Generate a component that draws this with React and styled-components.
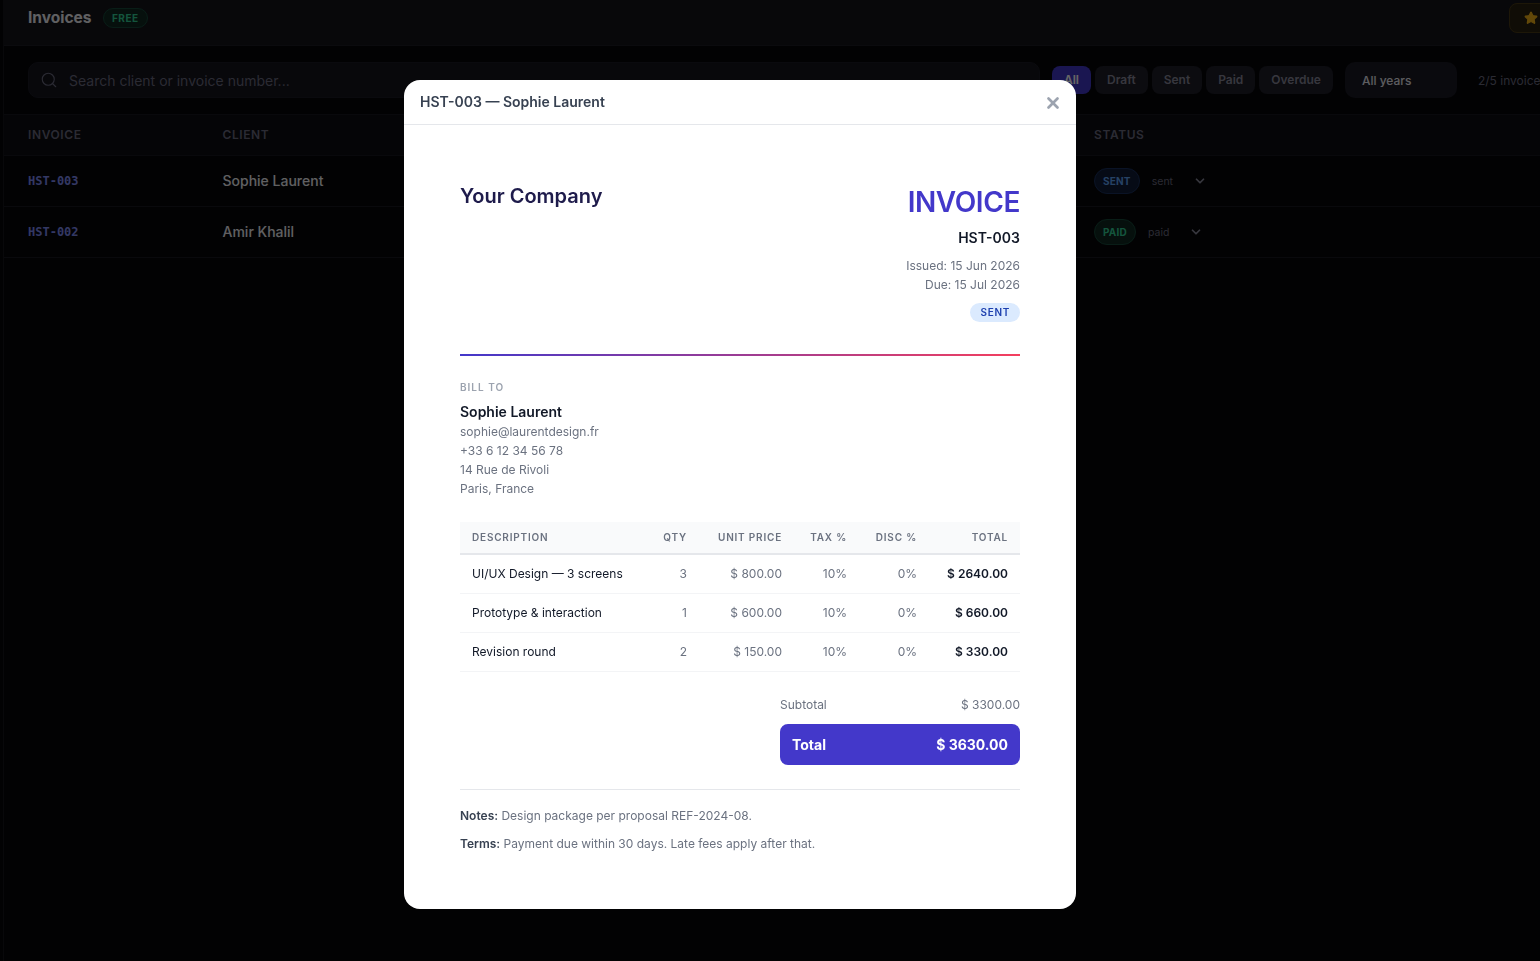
import styled, { createGlobalStyle } from "styled-components";
import { Search, ChevronDown, Star, X } from "lucide-react";

const GlobalStyle = createGlobalStyle`
  html, body {
    margin: 0;
    height: 100%;
    overflow: hidden;
    background: #060609;
    font-family: Inter, "Noto Sans", sans-serif;
  }
  * { box-sizing: border-box; }
`;

const Page = styled.div`
  width: 1640px;
  height: 961px;
  padding-left: 4px;
`;
const Main = styled.div`
  height: 100%;
  border-left: 1px solid #14141b;
  margin-left: -1px;
`;
const Header = styled.header`
  display: flex;
  align-items: center;
  height: 46px;
  padding: 0 0 10px 24px;
  gap: 11px;
  background: #14141b;
  border-bottom: 1px solid #1c1c25;
`;
const PageTitle = styled.h1`
  margin: 0;
  font-size: 15.5px;
  font-weight: 700;
  color: #f0f0f5;
`;
const FreeBadge = styled.span`
  padding: 3px 8.5px;
  border-radius: 999px;
  font-size: 10px;
  font-weight: 700;
  letter-spacing: 0.5px;
  color: #34d399;
  background: #0f2a22;
  border: 1px solid #17493a;
`;
const StarButton = styled.div`
  display: flex;
  align-items: center;
  width: 100px;
  height: 30px;
  margin-left: 1350px;
  padding-left: 14px;
  border-radius: 8px;
  color: #f5b417;
  background: #2a2210;
  border: 1px solid #4a3a14;
`;
const Toolbar = styled.div`
  display: flex;
  align-items: center;
  height: 68px;
  padding: 0 24px;
  gap: 12px;
`;
const SearchBox = styled.div`
  display: flex;
  align-items: center;
  width: 1012px;
  height: 36px;
  padding: 0 11px;
  gap: 11px;
  border-radius: 10px;
  font-size: 14px;
  color: #6b6b80;
  background: #14141c;
  border: 1px solid #1a1a24;
`;
const Chips = styled.div`
  display: flex;
  gap: 4px;
`;
const Chip = styled.div`
  padding: 6px 12px;
  height: 28px;
  border-radius: 8px;
  font-size: 12px;
  font-weight: 600;
  line-height: 16px;
  color: ${(p) => (p.$active ? "#ffffff" : "#8a8a9c")};
  background: ${(p) => (p.$active ? "#4338ca" : "#1e1e28")};
`;
const YearSelect = styled.div`
  width: 112px;
  height: 36px;
  padding: 0 17px;
  border-radius: 10px;
  font-size: 12px;
  font-weight: 500;
  line-height: 38px;
  color: #e8e8f0;
  background: #1a1a24;
`;
const Count = styled.span`
  margin-left: 9px;
  font-size: 12px;
  color: #6b6b80;
`;
const TableHead = styled.div`
  display: grid;
  grid-template-columns: 194.5px 871.5px 1fr;
  align-items: center;
  height: 42px;
  padding: 0 0 2px 24px;
  font-size: 12px;
  font-weight: 600;
  letter-spacing: 0.6px;
  color: #6b6b80;
  background: #0d0d13;
  border-top: 1px solid #181820;
  border-bottom: 1px solid #181820;
`;
const Row = styled.div`
  display: grid;
  grid-template-columns: 194.5px 871.5px 1fr;
  align-items: center;
  height: 51px;
  padding-left: 24px;
  border-bottom: 1px solid #181820;
`;
const InvoiceNo = styled.span`
  font-family: "DejaVu Sans Mono", monospace;
  font-size: 12px;
  font-weight: 700;
  color: #818cf8;
`;
const ClientName = styled.span`
  padding-bottom: 2px;
  font-size: 14px;
  font-weight: 500;
  color: #f0f0f5;
`;
const StatusCell = styled.div`
  display: flex;
  align-items: center;
  gap: 12px;
`;
const StatusPill = styled.span`
  padding: 6px 8px;
  border-radius: 999px;
  font-size: 10px;
  font-weight: 700;
  letter-spacing: 0.2px;
  color: ${(p) => (p.$paid ? "#34d399" : "#60a5fa")};
  background: ${(p) => (p.$paid ? "#0f2a22" : "#101d38")};
  border: 1px solid ${(p) => (p.$paid ? "#17493a" : "#1a3160")};
`;
const StatusText = styled.span`
  width: 29px;
  font-size: 10.5px;
  color: #6b6b80;
`;
const Overlay = styled.div`
  position: fixed;
  inset: 0;
  display: flex;
  align-items: flex-start;
  justify-content: center;
  padding: 80px 60px 0 0;
  background: rgba(0, 0, 0, 0.6);
`;
const Modal = styled.div`
  width: 672px;
  height: 829px;
  overflow: hidden;
  border-radius: 16px;
  background: #ffffff;
`;
const ModalHeader = styled.div`
  display: flex;
  align-items: center;
  justify-content: space-between;
  height: 45px;
  padding: 0 16px;
  border-bottom: 1px solid #e5e7eb;
`;
const ModalTitle = styled.span`
  padding-bottom: 2px;
  font-size: 14px;
  font-weight: 600;
  color: #374151;
`;
const CloseIcon = styled(X)`
  margin: 2px -2px 0 0;
  color: #9ca3af;
`;
const Paper = styled.div`
  padding: 56px 56px 0;
`;
const PaperTop = styled.div`
  display: flex;
  justify-content: space-between;
  height: 173px;
`;
const Company = styled.div`
  font-size: 20px;
  font-weight: 600;
  line-height: 30px;
  color: #1e1b4b;
`;
const Meta = styled.div`
  display: flex;
  flex-direction: column;
  align-items: flex-end;
  padding-top: 2px;
`;
const InvoiceWord = styled.div`
  font-size: 28px;
  font-weight: 600;
  line-height: 38px;
  letter-spacing: -0.4px;
  color: #4338ca;
`;
const MetaNumber = styled.div`
  margin-top: 7px;
  font-size: 14px;
  font-weight: 600;
  line-height: 20px;
  color: #111827;
`;
const MetaLines = styled.div`
  margin-top: 8px;
  text-align: right;
  font-size: 12px;
  line-height: 19px;
  color: #6b7280;
`;
const SentBadge = styled.span`
  margin-top: 9px;
  padding: 0 10px;
  border-radius: 999px;
  font-size: 10px;
  font-weight: 600;
  line-height: 19px;
  letter-spacing: 0.7px;
  color: #1e40af;
  background: #dbeafe;
`;
const GradientRule = styled.div`
  height: 2px;
  background: linear-gradient(90deg, #4338ca, #f43f5e);
`;
const BillTo = styled.div`
  display: flex;
  flex-direction: column;
  margin-top: 24px;
`;
const SectionLabel = styled.div`
  font-size: 10px;
  font-weight: 600;
  line-height: 14px;
  letter-spacing: 1px;
  color: #9ca3af;
`;
const BillName = styled.div`
  margin-top: 8px;
  font-size: 14px;
  font-weight: 600;
  line-height: 20px;
  color: #111827;
`;
const BillLine = styled.div`
  font-size: 12px;
  line-height: 19px;
  color: #6b7280;
`;
const Items = styled.table`
  width: 100%;
  margin-top: 24px;
  border-collapse: collapse;
  table-layout: fixed;
`;
const Th = styled.th`
  height: 32px;
  padding: 0 12px 2px;
  font-size: 10px;
  font-weight: 600;
  letter-spacing: 0.8px;
  text-align: ${(p) => (p.$left ? "left" : "right")};
  color: #6b7280;
  background: #f9fafb;
  border-bottom: 2px solid #e5e7eb;
`;
const Td = styled.td`
  height: 39px;
  padding: 0 12px;
  font-size: 12px;
  font-weight: ${(p) => (p.$strong ? 600 : 400)};
  text-align: ${(p) => (p.$left ? "left" : "right")};
  color: ${(p) => (p.$left || p.$strong ? "#111827" : "#6b7280")};
  border-bottom: 1px solid #f3f4f6;
`;
const Totals = styled.div`
  display: flex;
  flex-direction: column;
  width: 240px;
  margin: 23px 0 0 auto;
`;
const SubRow = styled.div`
  display: flex;
  justify-content: space-between;
  font-size: 12px;
  line-height: 19px;
  color: #6b7280;
`;
const TotalBar = styled.div`
  display: flex;
  align-items: center;
  justify-content: space-between;
  height: 41px;
  margin-top: 10px;
  padding: 0 12px;
  border-radius: 8px;
  font-size: 14px;
  font-weight: 700;
  color: #ffffff;
  background: #4338ca;
`;
const Footer = styled.div`
  margin-top: 24px;
  padding-top: 16px;
  border-top: 1px solid #e5e7eb;
`;
const FooterLine = styled.p`
  margin: 0 0 9px;
  font-size: 12px;
  line-height: 19px;
  color: #6b7280;
  b {
    font-weight: 600;
    color: #374151;
  }
`;

const rows = [
  ["UI/UX Design — 3 screens", 3, "$ 800.00", "$ 2640.00"],
  ["Prototype & interaction", 1, "$ 600.00", "$ 660.00"],
  ["Revision round", 2, "$ 150.00", "$ 330.00"],
];

const App = () => {
  return (
    <>
      <GlobalStyle />
      <Page>
        <Main>
          <Header>
            <PageTitle>Invoices</PageTitle>
            <FreeBadge>FREE</FreeBadge>
            <StarButton>
              <Star size={14} fill="currentColor" />
            </StarButton>
          </Header>
          <Toolbar>
            <SearchBox>
              <Search size={18} strokeWidth={1.5} />
              Search client or invoice number...
            </SearchBox>
            <Chips>
              <Chip $active>All</Chip>
              <Chip>Draft</Chip>
              <Chip>Sent</Chip>
              <Chip>Paid</Chip>
              <Chip>Overdue</Chip>
            </Chips>
            <YearSelect>All years</YearSelect>
            <Count>2/5 invoices</Count>
          </Toolbar>
          <TableHead>
            <span>INVOICE</span>
            <span>CLIENT</span>
            <span>STATUS</span>
          </TableHead>
          <Row>
            <InvoiceNo>HST-003</InvoiceNo>
            <ClientName>Sophie Laurent</ClientName>
            <StatusCell>
              <StatusPill>SENT</StatusPill>
              <StatusText>sent</StatusText>
              <ChevronDown size={14} strokeWidth={3} color="#8a8a9c" />
            </StatusCell>
          </Row>
          <Row>
            <InvoiceNo>HST-002</InvoiceNo>
            <ClientName>Amir Khalil</ClientName>
            <StatusCell>
              <StatusPill $paid>PAID</StatusPill>
              <StatusText>paid</StatusText>
              <ChevronDown size={14} strokeWidth={3} color="#8a8a9c" />
            </StatusCell>
          </Row>
        </Main>
      </Page>
      <Overlay>
        <Modal>
          <ModalHeader>
            <ModalTitle>HST-003 — Sophie Laurent</ModalTitle>
            <CloseIcon size={18} strokeWidth={3.6} />
          </ModalHeader>
          <Paper>
            <PaperTop>
              <Company>Your Company</Company>
              <Meta>
                <InvoiceWord>INVOICE</InvoiceWord>
                <MetaNumber>HST-003</MetaNumber>
                <MetaLines>
                  <div>Issued: 15 Jun 2026</div>
                  <div>Due: 15 Jul 2026</div>
                </MetaLines>
                <SentBadge>SENT</SentBadge>
              </Meta>
            </PaperTop>
            <GradientRule />
            <BillTo>
              <SectionLabel>BILL TO</SectionLabel>
              <BillName>Sophie Laurent</BillName>
              <BillLine>sophie@laurentdesign.fr</BillLine>
              <BillLine>+33 6 12 34 56 78</BillLine>
              <BillLine>14 Rue de Rivoli</BillLine>
              <BillLine>Paris, France</BillLine>
            </BillTo>
            <Items>
              <colgroup>
                <col />
                <col width="50" />
                <col width="95" />
                <col width="65" />
                <col width="70" />
                <col width="91" />
              </colgroup>
              <thead>
                <tr>
                  <Th $left>DESCRIPTION</Th>
                  <Th>QTY</Th>
                  <Th>UNIT PRICE</Th>
                  <Th>TAX %</Th>
                  <Th>DISC %</Th>
                  <Th>TOTAL</Th>
                </tr>
              </thead>
              <tbody>
                {rows.map(([desc, qty, price, total]) => (
                  <tr key={desc}>
                    <Td $left>{desc}</Td>
                    <Td>{qty}</Td>
                    <Td>{price}</Td>
                    <Td>10%</Td>
                    <Td>0%</Td>
                    <Td $strong>{total}</Td>
                  </tr>
                ))}
              </tbody>
            </Items>
            <Totals>
              <SubRow>
                <span>Subtotal</span>
                <span>$ 3300.00</span>
              </SubRow>
              <TotalBar>
                <span>Total</span>
                <span>$ 3630.00</span>
              </TotalBar>
            </Totals>
            <Footer>
              <FooterLine>
                <b>Notes:</b> Design package per proposal REF-2024-08.
              </FooterLine>
              <FooterLine>
                <b>Terms:</b> Payment due within 30 days. Late fees apply after that.
              </FooterLine>
            </Footer>
          </Paper>
        </Modal>
      </Overlay>
    </>
  );
};

export default App;
